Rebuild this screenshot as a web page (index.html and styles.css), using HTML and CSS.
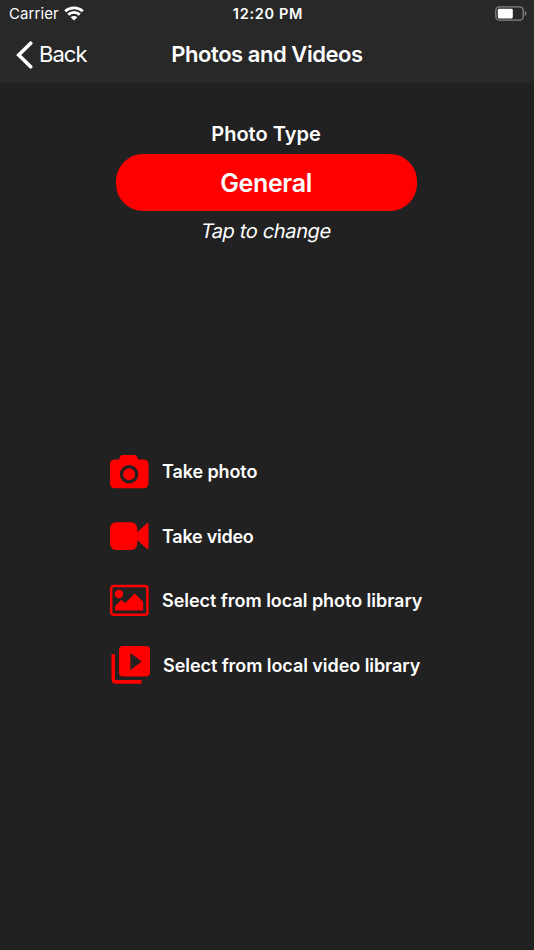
FILE: index.html
```html
<!DOCTYPE html>
<html lang="en">
<head>
<meta charset="utf-8">
<title>Photos and Videos</title>
<link rel="stylesheet" href="styles.css">
</head>
<body>
<header class="header">
  <div class="status">
    <div class="status-left">
      <span class="carrier">Carrier</span>
      <svg class="wifi" viewBox="0 0 20 15" width="20" height="15">
        <path d="M1.200 5.200C6.200.700 13.800.700 18.800 5.200M4.200 8.600c3.300-3 8.300-3 11.600 0" fill="none" stroke="#fff" stroke-width="2.800"/>
        <path d="M10 14.600 6.600 11.200c1.900-1.700 4.900-1.700 6.800 0z" fill="#fff"/>
      </svg>
    </div>
    <span class="time">12:20 PM</span>
    <svg class="battery" viewBox="0 0 32 16" width="32" height="16">
      <rect x=".8" y=".8" width="27.4" height="13.4" rx="3.6" fill="none" stroke="#858585" stroke-width="1.3"/>
      <rect x="2.8" y="2.8" width="15" height="9.6" rx="1.4" fill="#fff"/>
      <path d="M29.800 5c2.200.9 2.200 4.100 0 5z" fill="#858585"/>
    </svg>
  </div>
  <nav class="nav">
    <a class="back">
      <svg class="chevron" viewBox="0 0 18 28" width="18" height="28"><path d="M14.700 2.200 2.700 14l12 11.800" fill="none" stroke="#fff" stroke-width="3.600" stroke-linecap="round"/></svg>
      <span class="back-label">Back</span>
    </a>
    <h1 class="title">Photos and Videos</h1>
  </nav>
</header>
<main>
  <section class="type">
    <h2 class="type-label">Photo Type</h2>
    <button class="type-button"><span>General</span></button>
    <p class="hint">Tap to change</p>
  </section>
  <ul class="actions">
    <li class="action">
      <svg class="icon" viewBox="0 0 42 42" width="42" height="42">
        <path fill-rule="evenodd" d="M13.500 5h12q2 0 2.700 2l1 2.600H34q5.500 0 5.500 5v18.700q0 5-5.500 5H6q-5 0-5-5V14.600q0-5 5-5h4l1-2.600q.5-2 2.500-2zM20.100 15a9.200 9.200 0 1 0 0 18.400 9.200 9.200 0 0 0 0-18.400z"/>
        <circle cx="20.100" cy="24.200" r="6"/>
      </svg>
      <span class="label take-photo">Take photo</span>
    </li>
    <li class="action">
      <svg class="icon" viewBox="0 0 42 42" width="42" height="42">
        <rect x="1" y="7.200" width="27.200" height="27.700" rx="6"/>
        <path d="m28 17.200 10.200-9q1.300-1 1.300.9v24q0 1.800-1.300.8l-10.200-9z"/>
      </svg>
      <span class="label take-video">Take video</span>
    </li>
    <li class="action">
      <svg class="icon" viewBox="0 0 42 42" width="42" height="42">
        <rect x="2.200" y="6.900" width="36.200" height="28.800" rx="2.500" fill="none" stroke="#f00" stroke-width="2.500"/>
        <circle cx="9.900" cy="15" r="4.200"/>
        <path d="M6 31.500V27l6.500-6.200 3.500 3.500 9.700-9.800 8.500 8.300v8.700z"/>
      </svg>
      <span class="label select-photo">Select from local photo library</span>
    </li>
    <li class="action">
      <svg class="icon" viewBox="0 0 42 42" width="42" height="42">
        <path d="M2.500 10H6v25q0 1 1 1h25.500v3.700H7q-4.500 0-4.500-4.500z"/>
        <path fill-rule="evenodd" d="M14 2h23q4 0 4 4v22.500q0 4-4 4H14q-4 0-4-4V6q0-4 4-4zM21.400 9V26l11.300-8.500z"/>
      </svg>
      <span class="label select-video">Select from local video library</span>
    </li>
  </ul>
</main>
</body>
</html>
```
FILE: styles.css
```css
* { box-sizing: border-box; }
body {
  margin: 0;
  min-height: 950px;
  background: #212121;
  color: #fff;
  font-family: Inter, "Liberation Sans", sans-serif;
}
h1, h2, p, ul { margin: 0; padding: 0; }
.header { height: 83px; background: #282828; }
.status, .nav { display: grid; grid-template-columns: 1fr auto 1fr; align-items: center; }
.status { height: 27px; padding: 0 7px 0 9px; }
.status-left { display: flex; align-items: center; gap: 5px; }
.carrier { font-size: 15px; letter-spacing: .1px; }
.wifi { margin-top: -1px; }
.time { font-size: 14.5px; font-weight: 600; letter-spacing: .7px; }
.battery { justify-self: end; }
.nav { height: 55px; padding: 0 16px; }
.back { display: flex; align-items: center; gap: 5px; }
.back-label { margin-top: -1px; font-size: 22px; letter-spacing: -.95px; }
.title { margin-top: -1px; font-size: 22px; font-weight: 600; letter-spacing: -.45px; }
.type { display: flex; flex-direction: column; align-items: center; padding: 37px 2px 0 0; }
.type-label { height: 34px; line-height: 28px; font-size: 20px; font-weight: 600; }
.type-button {
  width: 301px; height: 57px; padding: 0; border: 0; border-radius: 27px;
  background: #f00; color: #fff; font: 600 25px Inter, sans-serif; letter-spacing: -.35px;
}
.hint { height: 40px; line-height: 41px; font-size: 20px; transform: skewX(-11deg); letter-spacing: -.35px; }
.actions { list-style: none; margin-top: 188px; padding-left: 109px; }
.action { display: flex; align-items: center; gap: 11px; height: 64.6px; }
.icon { flex: none; fill: #f00; }
.label { font-size: 18px; font-weight: 600; white-space: nowrap; letter-spacing: -.03px; }
.take-photo { letter-spacing: -.1px; padding-top: 1px; }
.take-video { letter-spacing: -.25px; padding-top: 1px; }
.select-video { margin-left: 1px; letter-spacing: -.06px; }
```
